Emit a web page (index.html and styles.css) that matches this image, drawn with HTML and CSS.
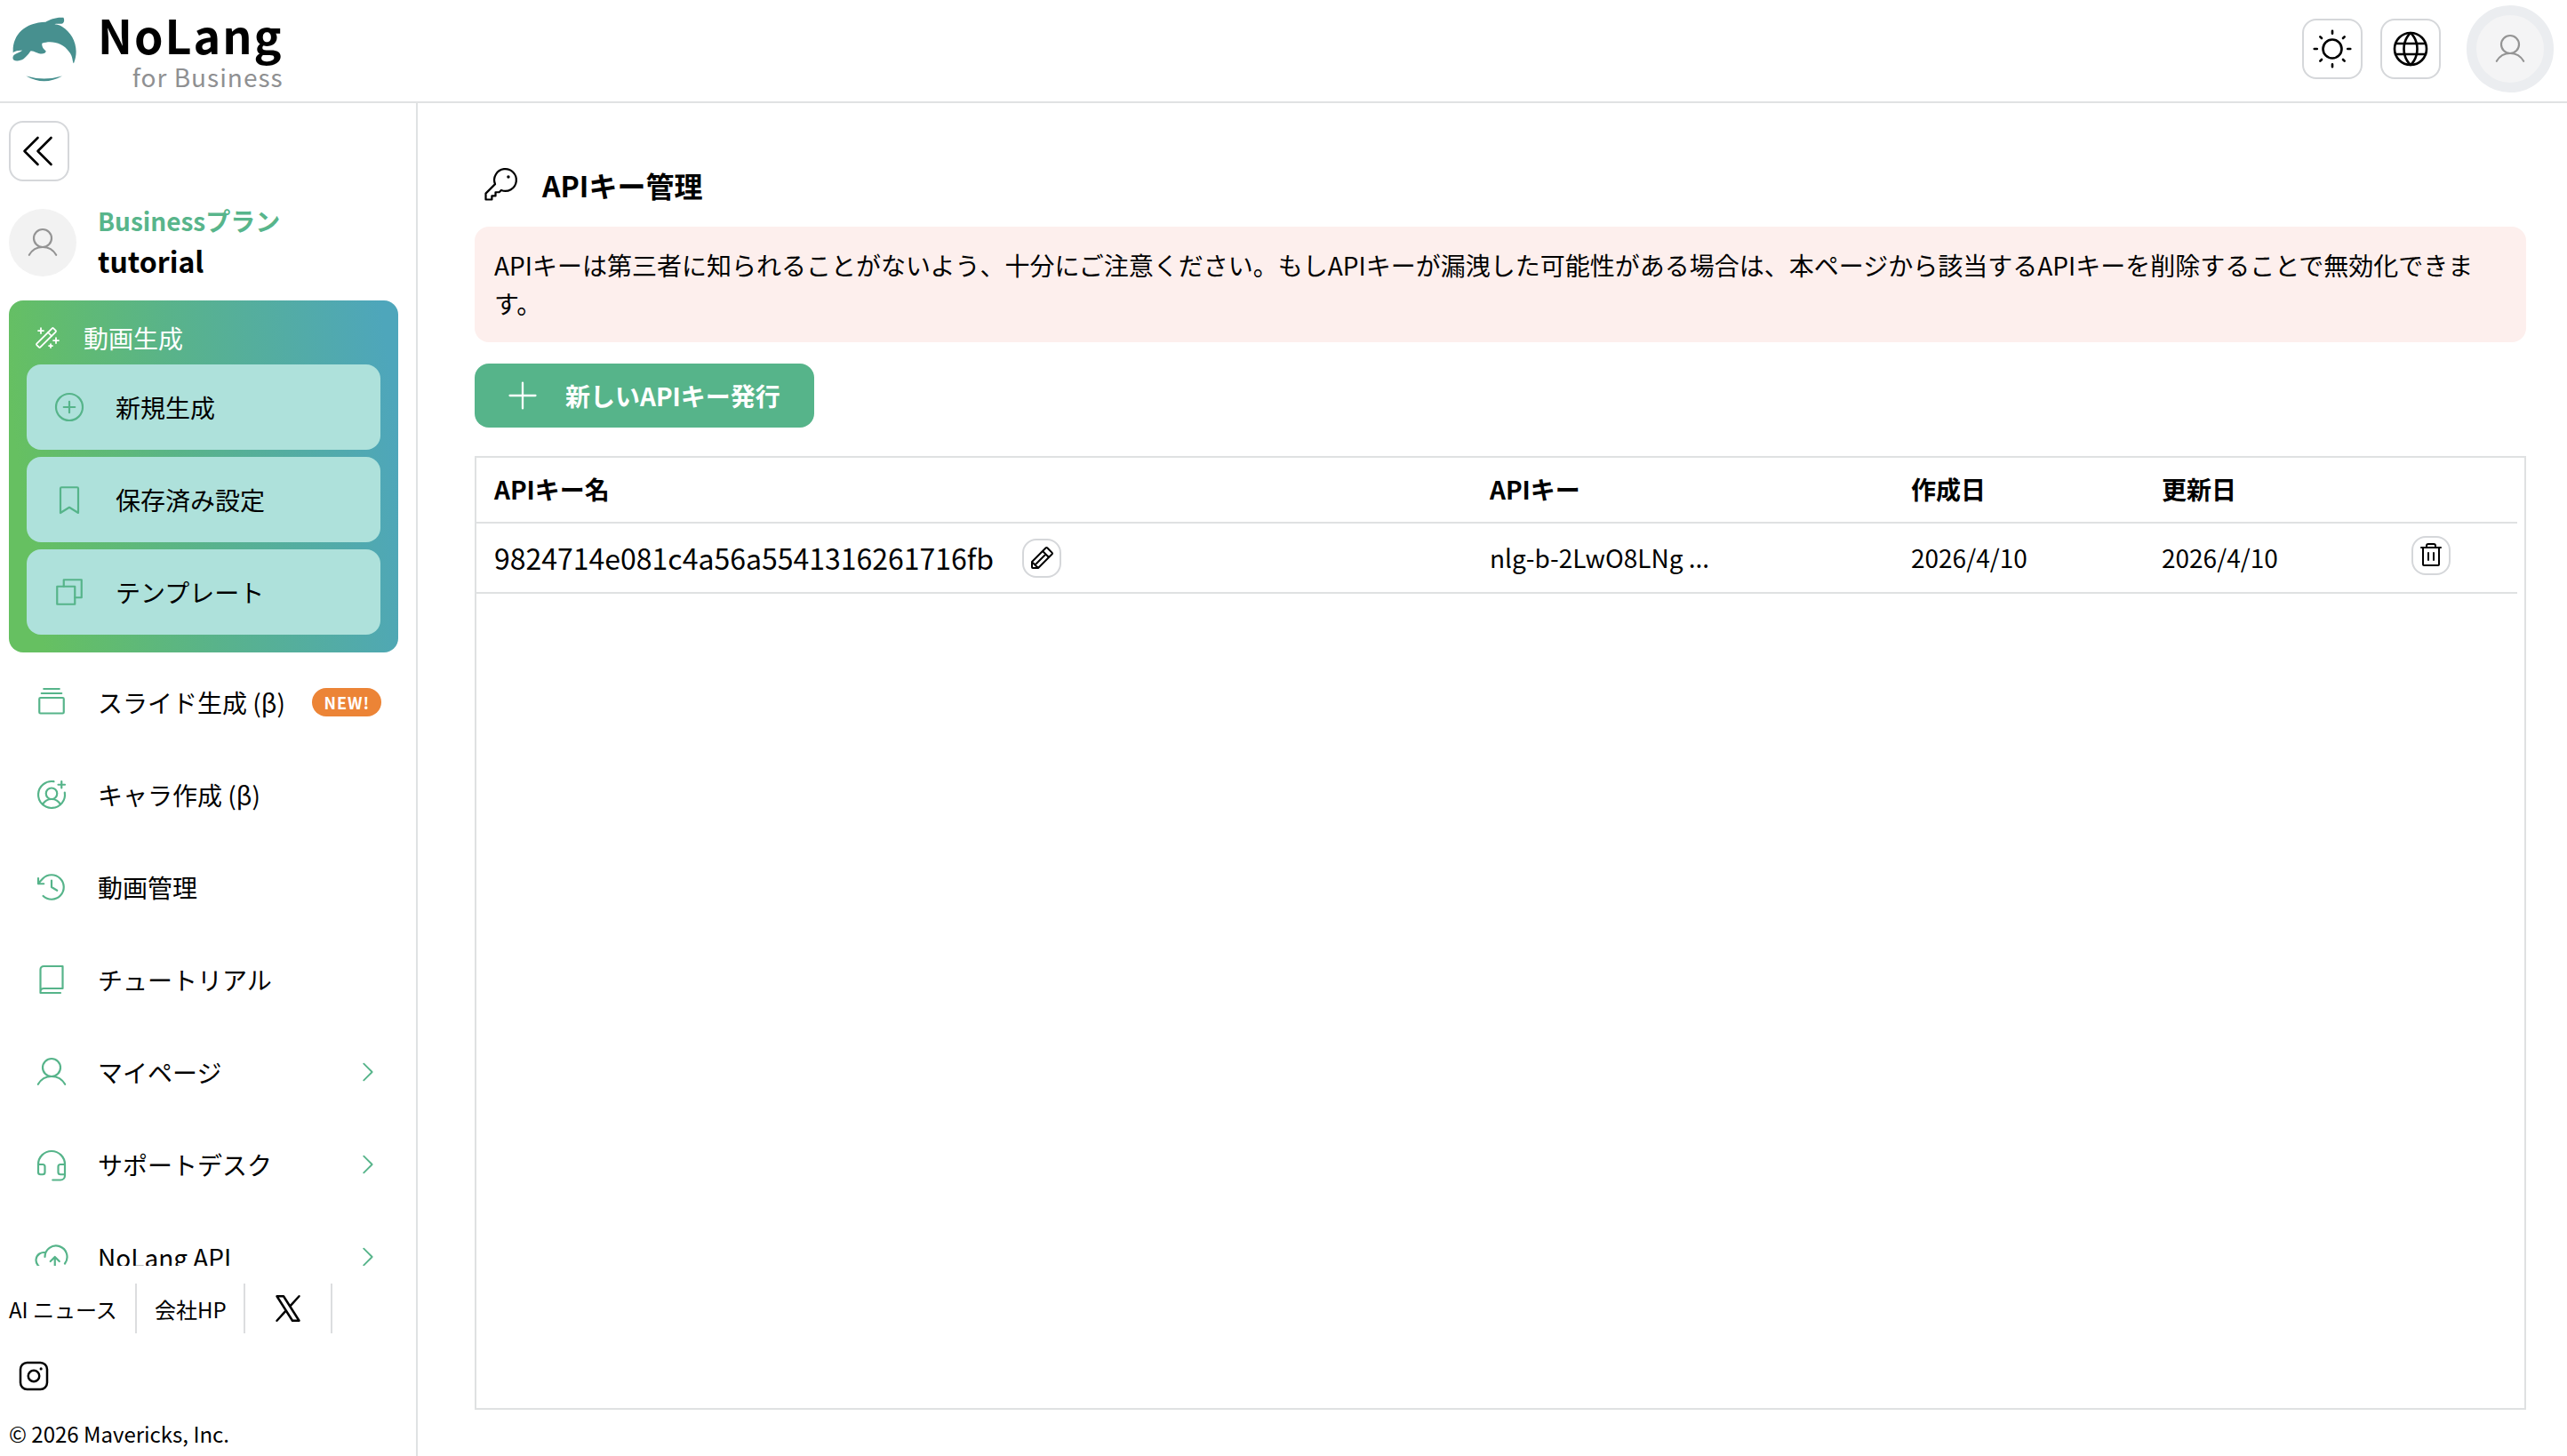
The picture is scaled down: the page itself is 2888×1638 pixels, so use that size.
FILE: index.html
```
<!DOCTYPE html>
<html lang="ja">
<head>
    <meta charset="UTF-8">
    <meta name="viewport" content="width=device-width, initial-scale=1.0">
    <title>NoLang for Business</title>
    <link rel="stylesheet" href="styles.css">
</head>
<body>
<header class="header">
    <a class="logo">
        <svg class="logo-mark" viewBox="15 20 225 230">
            <path d="M20 140C20 85 60 45 130 43C145 34 165 26 190 28C194 34 193 43 188 47C180 52 172 46 160 50C175 52 182 55 188 60C222 82 246 130 225 182C220 182 224 160 208 142C190 115 150 103 118 115C116 126 125 136 131 140C131 150 115 153 100 146C92 142 86 140 80 140C72 150 60 168 45 172C30 177 16 172 20 160C22 150 38 149 52 138C40 140 32 138 20 146Z"/>
            <path d="M64 225Q125 243 186 225Q125 260 64 225Z"/>
        </svg>
        <div class="logo-text">
            <span class="logo-name">NoLang</span>
            <span class="logo-sub">for Business</span>
        </div>
    </a>
    <div class="header-actions">
        <button class="square-btn">
            <svg class="icon icon-lg" viewBox="0 0 256 256"><circle cx="128" cy="128" r="56"/><path d="M128 36V20M64 64l-9-9M36 128H20M64 192l-9 9M128 220v16M192 192l9 9M220 128h16M192 64l9-9"/></svg>
        </button>
        <button class="square-btn">
            <svg class="icon icon-lg" viewBox="0 0 256 256"><circle cx="128" cy="128" r="96"/><path d="M168 128c0 64-40 96-40 96s-40-32-40-96 40-96 40-96 40 32 40 96ZM37.5 96h181M37.5 160h181"/></svg>
        </button>
        <div class="avatar avatar-ring">
            <svg class="icon" viewBox="0 0 256 256"><circle cx="128" cy="96" r="64"/><path d="M31 216a112 112 0 0 1 194 0"/></svg>
        </div>
    </div>
</header>

<div class="layout">
    <aside class="sidebar">
        <button class="square-btn collapse-btn">
            <svg class="icon icon-lg" viewBox="0 0 256 256"><path d="M200 208l-80-80 80-80M120 208l-80-80 80-80"/></svg>
        </button>

        <div class="profile">
            <div class="avatar">
                <svg class="icon" viewBox="0 0 256 256"><circle cx="128" cy="96" r="64"/><path d="M31 216a112 112 0 0 1 194 0"/></svg>
            </div>
            <div class="profile-text">
                <div class="plan">Businessプラン</div>
                <div class="user-name">tutorial</div>
            </div>
        </div>

        <nav class="menu">
            <div class="menu-group">
                <div class="group-title">
                    <svg class="icon icon-sm" viewBox="0 0 256 256"><rect x="21.5" y="105.4" width="213" height="45.2" rx="8" transform="rotate(-45 128 128)"/><path d="M144 80l32 32M216 128v48M192 152h48M80 40v48M56 64h48M168 184v32M152 200h32"/></svg>
                    動画生成
                </div>
                <a class="group-item">
                    <svg class="icon" viewBox="0 0 256 256"><circle cx="128" cy="128" r="96"/><path d="M88 128h80M128 88v80"/></svg>
                    新規生成
                </a>
                <a class="group-item">
                    <svg class="icon" viewBox="0 0 256 256"><path d="M192 224l-64-40-64 40V48a8 8 0 0 1 8-8h112a8 8 0 0 1 8 8Z"/></svg>
                    保存済み設定
                </a>
                <a class="group-item">
                    <svg class="icon" viewBox="0 0 256 256"><path d="M168 168h48V40H88v48"/><rect x="40" y="88" width="128" height="128"/></svg>
                    テンプレート
                </a>
            </div>

            <a class="menu-item">
                <svg class="icon" viewBox="0 0 256 256"><rect x="40" y="96" width="176" height="112" rx="8"/><path d="M56 64h144M72 32h112"/></svg>
                スライド生成 (β)
                <span class="badge">NEW!</span>
            </a>
            <a class="menu-item">
                <svg class="icon" viewBox="0 0 256 256"><path d="M176 56h48M200 32v48M222.7 112A95.9 95.9 0 1 1 144 33.3M63.8 199.4a72 72 0 0 1 128.4 0"/><circle cx="128" cy="120" r="40"/></svg>
                キャラ作成 (β)
            </a>
            <a class="menu-item">
                <svg class="icon" viewBox="0 0 256 256"><path d="M128 80v48l40 24M72 104H32V64M67.6 192A88 88 0 1 0 65.8 65.8C54 77.7 44 88.9 32 104"/></svg>
                動画管理
            </a>
            <a class="menu-item">
                <svg class="icon" viewBox="0 0 256 256"><path d="M48 216a24 24 0 0 1 24-24h136V32H72a24 24 0 0 0-24 24ZM48 216v8h144"/></svg>
                チュートリアル
            </a>
            <a class="menu-item">
                <svg class="icon" viewBox="0 0 256 256"><circle cx="128" cy="96" r="64"/><path d="M31 216a112 112 0 0 1 194 0"/></svg>
                マイページ
                <svg class="icon arrow" viewBox="0 0 256 256"><path d="M96 48l80 80-80 80"/></svg>
            </a>
            <a class="menu-item">
                <svg class="icon" viewBox="0 0 256 256"><path d="M224 128h-32a16 16 0 0 0-16 16v40a16 16 0 0 0 16 16h32v-72a96 96 0 1 0-192 0v56a16 16 0 0 0 16 16h16a16 16 0 0 0 16-16v-40a16 16 0 0 0-16-16H32M224 184v24a32 32 0 0 1-32 32h-56"/></svg>
                サポートデスク
                <svg class="icon arrow" viewBox="0 0 256 256"><path d="M96 48l80 80-80 80"/></svg>
            </a>
            <a class="menu-item">
                <svg class="icon" viewBox="0 0 256 256"><path d="M120 160l32-32 32 32M152 208v-80M96 208H72a56 56 0 1 1 13.9-110.3M80 128a80 80 0 1 1 144 48"/></svg>
                NoLang API
                <svg class="icon arrow" viewBox="0 0 256 256"><path d="M96 48l80 80-80 80"/></svg>
            </a>
        </nav>

        <footer class="side-footer">
            <div class="links">
                <a class="link link-first">AI ニュース</a>
                <a class="link link-company">会社HP</a>
                <a class="link link-x">
                    <svg class="icon bold" viewBox="0 0 256 256"><path d="M48 40h48l112 176h-48ZM113.9 143.5L48 216M208 40l-65.9 72.5"/></svg>
                </a>
            </div>
            <a class="instagram">
                <svg class="icon bold" viewBox="0 0 256 256"><rect x="32" y="32" width="192" height="192" rx="48"/><circle cx="128" cy="128" r="40"/><circle class="dot" cx="180" cy="76" r="10"/></svg>
            </a>
            <div class="copyright">© 2026 Mavericks, Inc.</div>
        </footer>
    </aside>

    <main class="content">
        <h1 class="title">
            <svg class="icon" viewBox="0 0 256 256"><path d="M93.2 122.8A72 72 0 1 1 133.2 162.8L120 176H96v24H72v24H32v-40Z"/><circle class="dot" cx="180" cy="76" r="10"/></svg>
            APIキー管理
        </h1>
        <div class="alert">APIキーは第三者に知られることがないよう、十分にご注意ください。もしAPIキーが漏洩した可能性がある場合は、本ページから該当するAPIキーを削除することで無効化できます。</div>
        <button class="create-btn">
            <svg class="icon" viewBox="0 0 256 256"><path d="M40 128h176M128 40v176"/></svg>
            新しいAPIキー発行
        </button>

        <div class="table-box">
            <div class="row row-head">
                <div>APIキー名</div>
                <div>APIキー</div>
                <div>作成日</div>
                <div>更新日</div>
                <div></div>
            </div>
            <div class="row">
                <div class="key-name">
                    <span>9824714e081c4a56a5541316261716fb</span>
                    <button class="mini-btn">
                        <svg class="icon" viewBox="0 0 256 256"><path d="M92.7 216H48a8 8 0 0 1-8-8v-44.7a8 8 0 0 1 2.3-5.6L165.7 34.3a8 8 0 0 1 11.3 0L221.7 79a8 8 0 0 1 0 11.3L98.3 213.7A8 8 0 0 1 92.7 216ZM136 64l56 56M164 92l-96 96M40 160l55.5 55.5"/></svg>
                    </button>
                </div>
                <div class="cell">nlg-b-2LwO8LNg ...</div>
                <div class="cell">2026/4/10</div>
                <div class="cell">2026/4/10</div>
                <div class="row-action">
                    <button class="mini-btn">
                        <svg class="icon" viewBox="0 0 256 256"><path d="M216 56H40M104 104v64M152 104v64M200 56v152a8 8 0 0 1-8 8H64a8 8 0 0 1-8-8V56M168 56V40a16 16 0 0 0-16-16h-48a16 16 0 0 0-16 16v16"/></svg>
                    </button>
                </div>
            </div>
        </div>
    </main>
</div>
</body>
</html>
```
FILE: styles.css
```
* {
    box-sizing: border-box;
}

body {
    display: flex;
    flex-direction: column;
    height: 100vh;
    margin: 0;
    overflow: hidden;
    background: #fff;
    color: #000;
    font-family: "Noto Sans CJK JP", "Noto Sans", sans-serif;
    font-size: 28px;
    line-height: 44px;
}

button {
    font: inherit;
    padding: 0;
    cursor: pointer;
}

.icon {
    width: 40px;
    height: 40px;
    flex: none;
    fill: none;
    stroke: currentColor;
    stroke-width: 14;
    stroke-linecap: round;
    stroke-linejoin: round;
}

.icon-lg {
    width: 48px;
    height: 48px;
    stroke-width: 14;
}

.icon-sm {
    width: 32px;
    height: 32px;
    stroke-width: 14;
}

.bold {
    stroke-width: 16;
}

.dot {
    fill: currentColor;
    stroke: none;
}

/* header */
.header {
    display: flex;
    justify-content: space-between;
    height: 116px;
    flex: none;
    border-bottom: 2px solid #e0e2e3;
    padding: 0 15px 0 13px;
}

.logo {
    display: flex;
    gap: 22px;
}

.logo-mark {
    width: 75px;
    height: 77px;
    margin-top: 17px;
    fill: #47908f;
}

.logo-text {
    display: flex;
    flex-direction: column;
    align-items: flex-end;
}

.logo-name {
    margin-top: 9px;
    font-size: 52px;
    font-weight: bold;
    line-height: 60px;
    letter-spacing: 2px;
}

.logo-sub {
    margin-top: 1px;
    font-size: 28px;
    line-height: 32px;
    letter-spacing: 1px;
    color: #8f9092;
}

.header-actions {
    display: flex;
    align-items: center;
    padding-bottom: 4px;
}

.square-btn {
    display: flex;
    align-items: center;
    justify-content: center;
    width: 68px;
    height: 68px;
    background: #fff;
    border: 2px solid #d5d7da;
    border-radius: 16px;
    margin-right: 20px;
    color: #000;
}

.avatar {
    display: flex;
    align-items: center;
    justify-content: center;
    width: 76px;
    height: 76px;
    border-radius: 50%;
    background: #f2f2f2;
    color: #949494;
}

.avatar-ring {
    box-sizing: content-box;
    border: 11px solid #ebedf0;
    margin-left: 9px;
    background: #f4f4f5;
}

/* sidebar */
.layout {
    display: flex;
    flex: 1;
    min-height: 0;
}

.sidebar {
    display: flex;
    flex-direction: column;
    width: 470px;
    flex: none;
    padding: 20px 20px 0 10px;
    border-right: 2px solid #e0e2e3;
}

.collapse-btn {
    flex: none;
}

.profile {
    display: flex;
    align-items: center;
    gap: 24px;
    height: 134px;
    flex: none;
    padding-top: 3px;
}

.profile-text {
    padding-bottom: 3px;
    font-weight: bold;
}

.plan {
    color: #58b58b;
}

.user-name {
    font-size: 32px;
    line-height: 46px;
}

.menu {
    flex: 1;
    min-height: 0;
    overflow: hidden;
}

.menu-group {
    display: flex;
    flex-direction: column;
    gap: 8px;
    padding: 20px;
    margin-bottom: 8px;
    border-radius: 16px;
    background: linear-gradient(82deg, #66c061 8%, #59b38a 47%, #4ea6bb 96%);
}

.group-title {
    display: flex;
    align-items: center;
    gap: 26px;
    height: 44px;
    padding-left: 6px;
    color: #fff;
}

.group-item {
    display: flex;
    align-items: center;
    gap: 32px;
    height: 96px;
    padding-left: 28px;
    border-radius: 16px;
    background: #aee1db;
}

.group-item .icon,
.menu-item .icon {
    color: #56b48a;
}

.menu-item {
    display: flex;
    align-items: center;
    gap: 32px;
    height: 96px;
    margin-bottom: 8px;
    padding: 0 20px 0 28px;
    white-space: nowrap;
}

.menu-item .arrow {
    width: 30px;
    height: 30px;
    margin-left: auto;
    stroke-width: 16;
}

/* the badge lines up with the inner edge of the green box */
.badge {
    width: 78px;
    height: 32px;
    flex: none;
    margin-left: -2px;
    padding-left: 1px;
    border-radius: 16px;
    background: #ec8436;
    color: #fff;
    font-size: 18px;
    font-weight: bold;
    line-height: 33px;
    letter-spacing: 1px;
    text-align: center;
}

.side-footer {
    flex: none;
    height: 214px;
    padding-top: 20px;
    font-size: 24px;
}

.links {
    display: flex;
    height: 56px;
}

.link {
    display: flex;
    align-items: center;
    padding: 1px 0 0 20px;
    border-right: 2px solid #dcdddf;
    white-space: nowrap;
}

.link-first {
    width: 144px;
    padding-left: 0;
}

.link-company {
    width: 122px;
}

.link-x {
    width: 98px;
    padding: 0 0 0 28px;
}

.instagram {
    display: flex;
    padding: 28px 0 0 8px;
}

.copyright {
    margin-top: 23px;
}

/* main */
.content {
    display: flex;
    flex-direction: column;
    align-items: flex-start;
    flex: 1;
    min-width: 0;
    padding: 67px 46px 52px 64px;
}

.title {
    display: flex;
    align-items: center;
    gap: 25px;
    margin: 0 0 22px;
    padding-left: 7px;
    height: 50px;
    font-size: 32px;
    font-weight: bold;
}

.title .icon {
    width: 44px;
    height: 44px;
    stroke-width: 13;
}

.alert {
    width: 100%;
    height: 130px;
    padding: 22px;
    border-radius: 16px;
    background: #fdefed;
    line-height: 43px;
}

.create-btn {
    display: flex;
    align-items: center;
    gap: 27px;
    width: 382px;
    height: 72px;
    margin: 24px 0 32px;
    padding-left: 33px;
    border: none;
    border-radius: 16px;
    background: #56b48a;
    color: #fff;
    font-weight: bold;
}

.create-btn .icon {
    width: 42px;
    height: 42px;
}

.table-box {
    flex: 1;
    width: 100%;
    padding-right: 8px;
    border: 2px solid #dfe1e2;
}

.row {
    display: grid;
    grid-template-columns: 1120px 474px 282px 281px 1fr;
    align-items: center;
    height: 79px;
    padding-left: 20px;
    border-bottom: 2px solid #dfe1e2;
    line-height: 42px;
}

.row-head {
    height: 74px;
    padding-bottom: 2px;
    font-weight: bold;
}

.cell,
.key-name span {
    padding-bottom: 2px;
}

.key-name {
    display: flex;
    align-items: center;
    gap: 32px;
    font-size: 32px;
}

.mini-btn {
    display: flex;
    align-items: center;
    justify-content: center;
    width: 44px;
    height: 44px;
    border: 2px solid #d5d7da;
    border-radius: 16px;
    background: #fff;
    color: #000;
}

.mini-btn .icon {
    width: 32px;
    height: 32px;
    stroke-width: 16;
}

.row-action {
    padding-bottom: 6px;
}
```
